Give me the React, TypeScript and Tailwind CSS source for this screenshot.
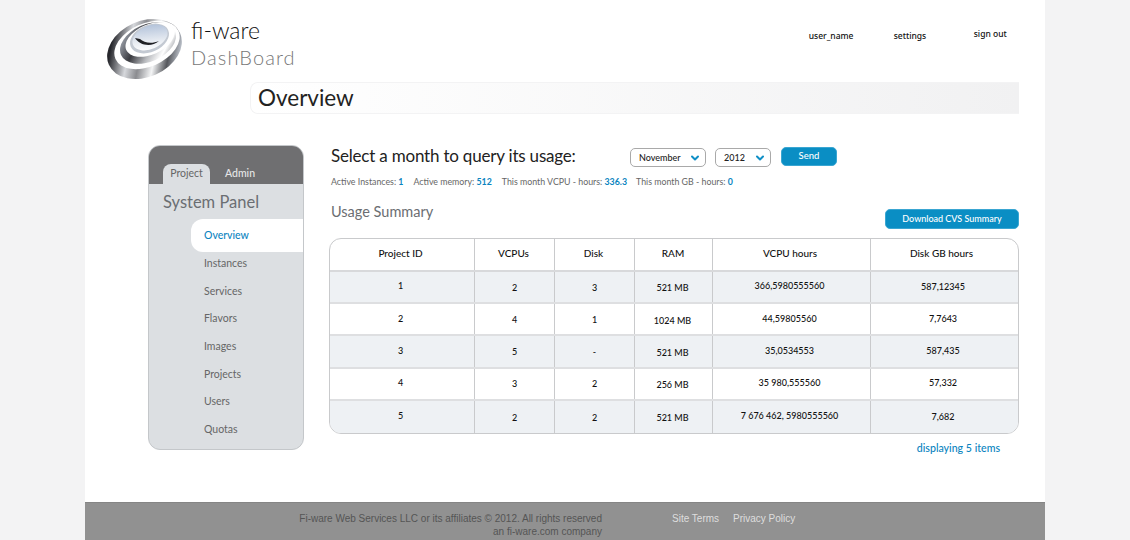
import { ChevronDown } from 'lucide-react';

const navItems = ['Instances', 'Services', 'Flavors', 'Images', 'Projects', 'Users', 'Quotas'];

const rows = [
  ['1', '2', '3', '521 MB', '366,5980555560', '587,12345'],
  ['2', '4', '1', '1024 MB', '44,59805560', '7,7643'],
  ['3', '5', '-', '521 MB', '35,0534553', '587,435'],
  ['4', '3', '2', '256 MB', '35 980,555560', '57,332'],
  ['5', '2', '2', '521 MB', '7 676 462, 5980555560', '7,682'],
];

const headers = ['Project ID', 'VCPUs', 'Disk', 'RAM', 'VCPU hours', 'Disk GB hours'];
const widths = ['w-[145px]', 'w-[80px]', 'w-[80px]', 'w-[78px]', 'w-[158px]', 'flex-1'];
// the cells in the mock are not quite centred
const headNudges = ['pr-[3px]', 'pr-[2px]', 'pr-[2px]', 'pr-[1px]', 'pr-[3px]', 'pr-[6px]'];
const nudges = ['pb-[2px] pr-[3px]', 'pt-[1px]', 'pt-[1px]', 'pt-[2px] pr-[2px]', 'pb-[2px] pr-[4px]', 'pb-[1px] pr-[3px]'];

function Logo() {
  return (
    <svg width="76" height="63" viewBox="0 0 76 63" className="shrink-0">
      <defs>
        <linearGradient id="outer" x1="0" y1="0.15" x2="1" y2="0.65">
          <stop offset="0" stopColor="#4a4a4e" />
          <stop offset="0.12" stopColor="#24252a" />
          <stop offset="0.35" stopColor="#d6d8dc" />
          <stop offset="0.5" stopColor="#8b8c90" />
          <stop offset="0.68" stopColor="#f4f5f6" />
          <stop offset="0.85" stopColor="#55575c" />
          <stop offset="1" stopColor="#c4cad3" />
        </linearGradient>
        <linearGradient id="middle" x1="0" y1="0.1" x2="1" y2="0.9">
          <stop offset="0" stopColor="#b7bdc7" />
          <stop offset="0.35" stopColor="#3a3b40" />
          <stop offset="0.6" stopColor="#b9bbbf" />
          <stop offset="0.8" stopColor="#ffffff" />
          <stop offset="1" stopColor="#777b82" />
        </linearGradient>
        <linearGradient id="dome" x1="0.8" y1="0" x2="0.25" y2="1">
          <stop offset="0" stopColor="#aebfd8" />
          <stop offset="0.65" stopColor="#e8ecf2" />
          <stop offset="1" stopColor="#ffffff" />
        </linearGradient>
      </defs>
      <ellipse cx="37.5" cy="32" rx="39" ry="28" transform="rotate(-24 37.5 32)" fill="url(#outer)" />
      <ellipse cx="40" cy="28" rx="34.5" ry="21.5" transform="rotate(-24 40 28)" fill="#ffffff" />
      <ellipse cx="41" cy="26" rx="29.5" ry="18.5" transform="rotate(-24 41 26)" fill="url(#middle)" />
      <ellipse cx="43" cy="22.5" rx="26" ry="15" transform="rotate(-24 43 22.5)" fill="#ffffff" />
      <ellipse cx="42.5" cy="21.5" rx="20.5" ry="13.5" transform="rotate(-24 42.5 21.5)" fill="#c3c9d2" />
      <ellipse cx="43" cy="20.5" rx="18.5" ry="11.5" transform="rotate(-24 43 20.5)" fill="url(#dome)" />
      <path d="M28 21 C32 28 44 31 52 24 C45 27 37 26 33 22 Z" fill="#1f2024" />
    </svg>
  );
}

function Select({ label, className }: { label: string; className: string }) {
  return (
    <div className={`h-[19px] flex items-center justify-between pl-[8px] pr-[4px] border border-[#a9a9a9] rounded-[5px] text-[9px] font-medium text-[#222] ${className}`}>
      <span>{label}</span>
      <ChevronDown size={12} strokeWidth={4} className="text-[#0f8fc6]" />
    </div>
  );
}

export default function App() {
  return (
    <div className="h-[540px] bg-[#f3f3f4] flex justify-center overflow-hidden font-['Lato',sans-serif]">
      <div className="w-[960px] bg-white flex flex-col">
        <header className="h-[82px] flex shrink-0">
          <div className="ml-[22px] mt-[17px]">
            <Logo />
          </div>
          <div className="ml-[8px] mt-[15px]">
            <div className="text-[23px] leading-[30px] font-light text-[#111]">fi-ware</div>
            <div className="text-[20px] leading-[24px] font-light tracking-[1.1px] text-[#777]">DashBoard</div>
          </div>
          <nav className="relative flex-1 text-[8.5px] font-medium text-[#111] font-['Noto_Sans',sans-serif]">
            <span className="absolute left-[513px] top-[30px]">user_name</span>
            <span className="absolute left-[598px] top-[30px]">settings</span>
            <span className="absolute left-[678px] top-[28px]">sign out</span>
          </nav>
        </header>

        <div className="ml-[165px] w-[769px] h-[32px] pl-[7px] flex items-center rounded-l-lg bg-gradient-to-r from-white to-[#f1f1f2] border border-r-0 border-[#f3f3f4] text-[22.5px] text-[#222] shrink-0">
          Overview
        </div>

        <div className="flex mt-[31px]">
          <aside className="ml-[63px] w-[156px] h-[305px] rounded-xl overflow-hidden border border-[#c4c7ca] bg-[#dcdfe2] shrink-0">
            <div className="h-[38px] bg-[#6f6f71] flex items-end pl-[14px] text-[10.5px]">
              <div className="w-[47px] h-[20px] rounded-t-lg bg-[#dcdfe2] text-[#666] flex items-center justify-center">Project</div>
              <div className="ml-[15px] h-[20px] text-[#e6e6e6] flex items-center font-medium">Admin</div>
            </div>
            <div className="pl-[14px] mt-[7px] text-[16.5px] leading-[22px] text-[#6b6e72]">System Panel</div>
            <div className="ml-[42px] mt-[6px] h-[33px] pl-[13px] flex items-center bg-white rounded-l-xl text-[10.5px] font-medium text-[#0a84c0]">Overview</div>
            <ul className="pl-[55px] mt-[-2px] text-[10.5px] text-[#666]">
              {navItems.map((item) => (
                <li key={item} className="h-[27.7px] flex items-center">{item}</li>
              ))}
            </ul>
          </aside>

          <main className="ml-[25px] w-[690px]">
            <div className="flex items-start h-[30px]">
              <h2 className="ml-[2px] w-[299px] text-[17px] tracking-[-0.2px] leading-[22px] text-[#222]">Select a month to query its usage:</h2>
              <Select label="November" className="mt-[3px] w-[76px]" />
              <Select label="2012" className="mt-[3px] ml-[9px] w-[56px]" />
              <button className="ml-[10px] mt-[2px] w-[56px] h-[19px] rounded-[5px] border border-[#3aa6d2] bg-[#0a8ec4] text-white text-[9.5px] font-medium">Send</button>
            </div>
            <div className="ml-[2px] h-[14px] flex text-[8.8px] leading-[14px] text-[#666]">
              <span>Active Instances: <b className="font-bold text-[#0a84c0]">1</b></span>
              <span className="ml-[10px]">Active memory: <b className="font-bold text-[#0a84c0]">512</b></span>
              <span className="ml-[10px]">This month VCPU - hours: <b className="font-bold text-[#0a84c0]">336.3</b></span>
              <span className="ml-[9px]">This month GB - hours: <b className="font-bold text-[#0a84c0]">0</b></span>
            </div>
            <div className="mt-[13px] h-[36px] flex justify-between items-start">
              <h3 className="ml-[2px] text-[14.5px] leading-[20px] text-[#6b6e72]">Usage Summary</h3>
              <button className="mt-[7px] w-[134px] h-[20px] rounded-[5px] border border-[#3aa6d2] bg-[#0a8ec4] text-white text-[9px] font-medium">Download CVS Summary</button>
            </div>
            <div className="border border-[#c9cacc] rounded-xl overflow-hidden text-[9px] font-medium text-[#111]">
              <div className="flex h-[33px] border-b-2 border-[#d8d9db] text-[10px]">
                {headers.map((h, i) => (
                  <div key={h} className={`${widths[i]} flex items-center justify-center pb-[2px] ${headNudges[i]} ${i < 5 ? 'border-r border-[#c9cacc]' : ''}`}>{h}</div>
                ))}
              </div>
              {rows.map((row, r) => (
                <div key={r} className={`flex h-[32.2px] ${r % 2 === 0 ? 'bg-[#eef1f4]' : 'bg-white'} ${r < 4 ? 'border-b-2 border-[#dedfe1]' : ''}`}>
                  {row.map((cell, i) => (
                    <div key={i} className={`${widths[i]} flex items-center justify-center ${nudges[i]} ${i < 5 ? 'border-r border-[#c9cacc]' : ''}`}>{cell}</div>
                  ))}
                </div>
              ))}
            </div>
            <div className="mt-[7px] pr-[19px] text-right text-[10.6px] font-medium text-[#0a84c0]">displaying 5 items</div>
          </main>
        </div>

        <footer className="mt-auto h-[38px] bg-[#919191] border-t border-[#858585] flex text-[10px] leading-[13px] font-['Liberation_Sans',sans-serif] shrink-0">
          <div className="ml-[213px] mt-[9px] w-[304px] text-right whitespace-nowrap text-[#555]">
            Fi-ware Web Services LLC or its affiliates © 2012. All rights reserved
            <br />
            an fi-ware.com company
          </div>
          <div className="ml-[70px] mt-[9px] text-[#dedede]">Site Terms</div>
          <div className="ml-[14px] mt-[9px] text-[#dedede]">Privacy Policy</div>
        </footer>
      </div>
    </div>
  );
}
